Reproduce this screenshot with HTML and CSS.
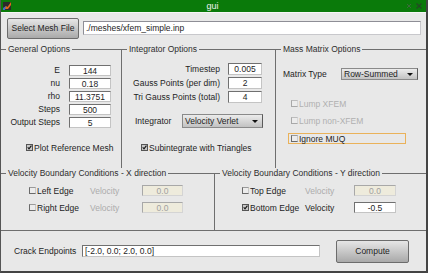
FILE: index.html
```html
<!DOCTYPE html>
<html lang="en">

<head>
    <meta charset="UTF-8">
    <meta name="viewport" content="width=device-width, initial-scale=1.0">
    <title>gui</title>
    <link rel="stylesheet" href="styles.css">
</head>

<body>
    <div class="window">
        <div class="titlebar">
            <svg class="app-icon" width="8" height="8" viewBox="0 0 8 8">
                <rect width="8" height="8" fill="#2a2a2a"/>
                <path d="M0 7 L3 4 L4.5 5 L8 0 L8 3 L5 7 Z" fill="#e06a1c"/>
                <path d="M0 8 L0 6 L3 4 L2 8 Z" fill="#3a6fc8"/>
            </svg>
            <span class="title">gui</span>
            <div class="win-buttons">
                <svg width="6" height="6" viewBox="0 0 6 6"><path d="M1 1 L5 5 M5 1 L1 5" stroke="#3c6a3c" stroke-width="1"/></svg>
                <svg width="6" height="6" viewBox="0 0 6 6"><path d="M0.5 0.5 L5.5 5.5 M5.5 0.5 L0.5 5.5" stroke="#244a24" stroke-width="1.4"/></svg>
            </div>
        </div>

        <div class="mesh-row">
            <button class="btn mesh-btn">Select Mesh File</button>
            <input class="field mesh-path" type="text" value="./meshes/xfem_simple.inp">
        </div>

        <div class="options-row">
            <fieldset class="panel general">
                <legend>General Options</legend>
                <div class="param-grid">
                    <label>E</label><input class="field" type="text" value="144">
                    <label>nu</label><input class="field" type="text" value="0.18">
                    <label>rho</label><input class="field" type="text" value="11.3751">
                    <label>Steps</label><input class="field" type="text" value="500">
                    <label>Output Steps</label><input class="field" type="text" value="5">
                </div>
                <div class="check-row plot-mesh">
                    <span class="check checked"><svg width="7" height="7" viewBox="0 0 7 7"><path d="M1 3.2 L2.8 5.4 L6.2 0.8" fill="none" stroke="#111" stroke-width="1.5"/></svg></span>
                    <span>Plot Reference Mesh</span>
                </div>
            </fieldset>

            <fieldset class="panel integrator">
                <legend>Integrator Options</legend>
                <div class="param-grid">
                    <label>Timestep</label><input class="field" type="text" value="0.005">
                    <label>Gauss Points (per dim)</label><input class="field" type="text" value="2">
                    <label>Tri Gauss Points (total)</label><input class="field" type="text" value="4">
                </div>
                <div class="select-row">
                    <span class="select-label">Integrator</span>
                    <div class="select">Velocity Verlet<span class="arrow"></span></div>
                </div>
                <div class="check-row subintegrate">
                    <span class="check checked"><svg width="7" height="7" viewBox="0 0 7 7"><path d="M1 3.2 L2.8 5.4 L6.2 0.8" fill="none" stroke="#111" stroke-width="1.5"/></svg></span>
                    <span>Subintegrate with Triangles</span>
                </div>
            </fieldset>

            <fieldset class="panel mass">
                <legend>Mass Matrix Options</legend>
                <div class="select-row">
                    <span class="select-label">Matrix Type</span>
                    <div class="select">Row-Summed<span class="arrow"></span></div>
                </div>
                <div class="mass-checks">
                    <div class="check-row disabled"><span class="check"></span><span>Lump XFEM</span></div>
                    <div class="check-row disabled"><span class="check"></span><span>Lump non-XFEM</span></div>
                    <div class="check-row focused"><span class="check"></span><span>Ignore MUQ</span></div>
                </div>
            </fieldset>
        </div>

        <div class="velocity-row">
            <fieldset class="panel vel-x">
                <legend>Velocity Boundary Conditions - X direction</legend>
                <div class="vel-grid">
                    <div class="check-row"><span class="check"></span><span>Left Edge</span></div>
                    <span class="vel-label off">Velocity</span>
                    <input class="field off" type="text" value="0.0" disabled>
                    <div class="check-row"><span class="check"></span><span>Right Edge</span></div>
                    <span class="vel-label off">Velocity</span>
                    <input class="field off" type="text" value="0.0" disabled>
                </div>
            </fieldset>
            <fieldset class="panel vel-y">
                <legend>Velocity Boundary Conditions - Y direction</legend>
                <div class="vel-grid">
                    <div class="check-row"><span class="check"></span><span>Top Edge</span></div>
                    <span class="vel-label off">Velocity</span>
                    <input class="field off" type="text" value="0.0" disabled>
                    <div class="check-row">
                        <span class="check checked"><svg width="7" height="7" viewBox="0 0 7 7"><path d="M1 3.2 L2.8 5.4 L6.2 0.8" fill="none" stroke="#111" stroke-width="1.5"/></svg></span>
                        <span>Bottom Edge</span>
                    </div>
                    <span class="vel-label">Velocity</span>
                    <input class="field" type="text" value="-0.5">
                </div>
            </fieldset>
        </div>

        <div class="crack-row">
            <span class="crack-label">Crack Endpoints</span>
            <input class="field crack-field" type="text" value="[-2.0, 0.0; 2.0, 0.0]">
            <button class="btn compute-btn">Compute</button>
        </div>
    </div>
</body>

</html>
```

FILE: styles.css
```css
body {
    margin: 0;
    font-family: "Liberation Sans", Arial, sans-serif;
    font-size: 8.5px;
    color: #1e1e1e;
    background-color: #e8e8e8;
}

.window {
    width: 428px;
    height: 273px;
    box-sizing: border-box;
    border-left: 1px solid #555;
    border-right: 2px solid #444;
    border-bottom: 2px solid #444;
    background-color: #e8e8e8;
    display: flex;
    flex-direction: column;
}

/* title bar */
.titlebar {
    height: 12px;
    flex: none;
    background-color: #0a7a0a;
    border-bottom: 1px solid #f6f6f6;
    display: grid;
    grid-template-columns: 1fr auto 1fr;
    align-items: center;
    padding: 0 4px 0 2px;
}

.app-icon {
    display: block;
}

.title {
    color: #f4f4f4;
    font-size: 9px;
    line-height: 12px;
}

.win-buttons {
    justify-self: end;
    display: flex;
    gap: 4px;
}

.win-buttons svg {
    display: block;
}

/* common controls */
.btn {
    font-family: inherit;
    font-size: 8.5px;
    color: #222;
    padding: 0;
    border: 1px solid #6c6c6c;
    border-radius: 2px;
    background: linear-gradient(#e6e6e6, #a9a9a9);
}

.field {
    box-sizing: border-box;
    margin: 0;
    padding: 0 2px;
    font-family: inherit;
    font-size: 8.5px;
    color: #1e1e1e;
    text-align: center;
    background-color: #fff;
    border: 1px solid;
    border-color: #707070 #c4c4c4 #c4c4c4 #707070;
    height: 11px;
    width: 100%;
}

.field.off {
    background-color: #eeebdc;
    color: #a0a0a0;
    border-color: #a8a8a8 #d4d4d4 #d4d4d4 #a8a8a8;
}

.check-row {
    display: flex;
    align-items: center;
    gap: 1px;
    height: 11px;
    box-sizing: border-box;
    white-space: nowrap;
}

.check {
    width: 7px;
    height: 7px;
    box-sizing: border-box;
    border: 1px solid;
    border-color: #9a9a9a #c8c8c8 #6a6a6a #6a6a6a;
    background-color: #ececec;
    display: flex;
    align-items: center;
    justify-content: center;
}

.check svg {
    display: block;
}

.check.checked {
    border-color: #555;
    background-color: #c8c8c8;
}

.check-row.disabled {
    color: #b0b0b0;
}

.check-row.disabled .check {
    border-color: #bcbcbc #d8d8d8 #a8a8a8 #a8a8a8;
}

.select {
    position: relative;
    box-sizing: border-box;
    border: 1px solid #8a8a8a;
    border-right-color: #5a5a5a;
    background: linear-gradient(#ececec, #c2c2c2);
    padding-left: 2px;
    display: flex;
    align-items: center;
    white-space: nowrap;
}

.select .arrow {
    position: absolute;
    right: 4px;
    top: 50%;
    margin-top: -1px;
    border-left: 3px solid transparent;
    border-right: 3px solid transparent;
    border-top: 3px solid #111;
}

/* top row */
.mesh-row {
    height: 31px;
    box-sizing: border-box;
    flex: none;
    display: flex;
    align-items: center;
    gap: 4px;
    padding: 4px 0 5px 6px;
}

.mesh-btn {
    width: 72px;
    height: 21px;
}

.mesh-path {
    width: 338px;
    height: 14px;
    text-align: left;
    border-color: #8e8e96 #c8c8cc #c8c8cc #8e8e96;
}

/* panels */
.panel {
    margin: 0;
    padding: 0;
    min-width: 0;
    border: none;
    border-top: 1px solid #6e6e6e;
}

.panel legend {
    padding: 0 2px;
    margin-left: 5px;
    line-height: 11px;
    color: #2e2e2e;
}

.options-row {
    height: 124px;
    flex: none;
    display: grid;
    grid-template-columns: 120px 154px 1fr;
}

.integrator,
.mass,
.vel-y {
    border-left: 1px solid #6e6e6e;
}

.param-grid {
    display: grid;
    row-gap: 2px;
    align-items: center;
}

.param-grid label {
    text-align: right;
    white-space: nowrap;
    line-height: 11px;
}

.general .param-grid {
    grid-template-columns: 59px 42px;
    grid-auto-rows: 11px;
    column-gap: 9px;
    margin-top: 10px;
}

.integrator .param-grid {
    grid-template-columns: 98px 34px;
    grid-auto-rows: 12px;
    column-gap: 8px;
    margin-top: 8px;
}

.integrator .field {
    height: 12px;
}

.plot-mesh {
    margin-top: 14px;
    padding-left: 25px;
}

.select-row {
    display: flex;
    align-items: center;
}

.integrator .select-row {
    margin-top: 11px;
    padding-left: 13px;
}

.integrator .select-label {
    width: 47px;
}

.integrator .select {
    width: 81px;
    height: 14px;
}

.subintegrate {
    margin-top: 14px;
    padding-left: 19px;
}

.mass .select-row {
    margin-top: 13px;
    padding-left: 7px;
}

.mass .select-label {
    width: 58px;
}

.mass .select {
    width: 77px;
    height: 12px;
}

.mass-checks {
    display: flex;
    flex-direction: column;
    gap: 6px;
    margin: 18px 0 0 12px;
}

.mass-checks .check-row {
    width: 118px;
    padding-left: 2px;
    border: 1px solid transparent;
}

.mass-checks .focused {
    border-color: #eab25a;
    margin-top: 1px;
}

/* velocity panels */
.velocity-row {
    height: 63px;
    flex: none;
    display: grid;
    grid-template-columns: 213px 1fr;
}

.velocity-row .panel {
    border-bottom: 1px solid #6e6e6e;
}

.vel-grid {
    display: grid;
    grid-auto-rows: 11px;
    row-gap: 6px;
    align-items: center;
    margin-top: 6px;
}

.vel-x .vel-grid {
    grid-template-columns: 61px 52px 41px;
    padding-left: 28px;
}

.vel-y .vel-grid {
    grid-template-columns: 63px 49px 42px;
    padding-left: 27px;
}

.vel-label.off {
    color: #acacac;
}

/* bottom row */
.crack-row {
    flex: 1;
    display: flex;
    align-items: center;
    padding-left: 13px;
}

.crack-label {
    width: 68px;
}

.crack-field {
    width: 238px;
    height: 12px;
    text-align: left;
}

.compute-btn {
    width: 73px;
    height: 23px;
    margin-left: 16px;
}
```
